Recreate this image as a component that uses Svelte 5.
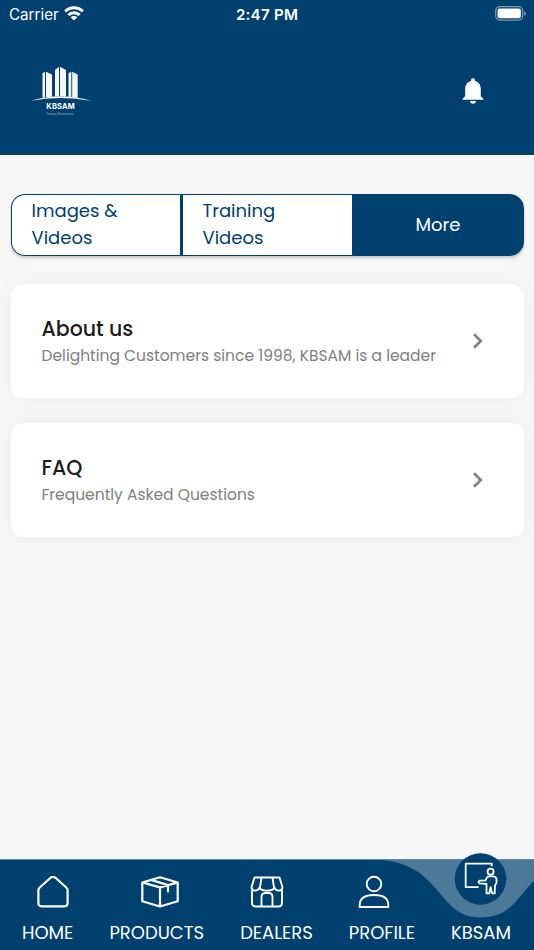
<script lang="ts">
  interface Item {
    title: string;
    text: string;
  }

  const tabs = ['Images & Videos', 'Training Videos', 'More'];

  const items: Item[] = [
    { title: 'About us', text: 'Delighting Customers since 1998, KBSAM is a leader' },
    { title: 'FAQ', text: 'Frequently Asked Questions' }
  ];

  const labels = ['HOME', 'PRODUCTS', 'DEALERS', 'PROFILE', 'KBSAM'];

  let active = $state('More');
</script>

<div class="screen">
  <header>
    <div class="status">
      <div class="carrier">
        <span>Carrier</span>
        <svg width="20" height="15" viewBox="0 0 20 15" fill="none" stroke="#fff" stroke-width="3">
          <path d="M1.2 5.3C6.2.5 13.8.5 18.8 5.3" />
          <path d="M4.4 9c3.2-3 8-3 11.2 0" />
          <path d="M10 14.5 6.6 11.3c1.9-1.7 4.9-1.7 6.8 0Z" fill="#fff" stroke="none" />
        </svg>
      </div>
      <strong>2:47 PM</strong>
      <svg class="battery" width="32" height="15" viewBox="0 0 32 15">
        <rect x=".7" y=".7" width="27" height="13.4" rx="4" fill="none" stroke="#7f9fb7" stroke-width="1.2" />
        <rect x="2.5" y="2.5" width="23.4" height="9.8" rx="2.2" fill="#fff" />
        <path d="M29.2 5v4.8q1.8-.7 1.8-2.4T29.2 5Z" fill="#7f9fb7" />
      </svg>
    </div>
    <div class="brand">
      <svg width="60" height="52" viewBox="0 0 60 52">
        <g fill="#f6f6f6">
          <path d="M11.5 7.2 14 5.8v25.5l-2.5.4ZM15 5.8l6 2.7v22.2l-6 .6Z" />
          <path d="M24 4 28 .8v29.5l-4 .2ZM29 .7l6 3.2v26.7l-6-.3Z" />
          <path d="M37.5 7.2 40.3 5.8v25.3l-2.8-.4ZM41.2 5.8l5.5 2.6v23.5l-5.5-.7Z" />
          <path d="M0 34.8Q29 25.5 60 34.8 29 29 0 34.8Z" />
        </g>
        <text x="15.3" y="43.4" textLength="28.5" class="logo-name">KBSAM</text>
        <text x="15.5" y="49" textLength="27" class="logo-tag">Framing Relationships</text>
      </svg>
      <svg width="22" height="26" viewBox="0 0 22 26" fill="#fff">
        <path d="M11 .2c-1.2 0-2 .8-2 2v.9c-3.6.9-5.8 4-5.8 8v7.2L.6 20.8v1h20.8v-1l-2.6-2.5v-7.2c0-4-2.2-7.1-5.8-8v-.9c0-1.2-.8-2-2-2Z" />
        <path d="M8.2 23.1h5.6a2.8 2.6 0 0 1-5.6 0Z" />
      </svg>
    </div>
  </header>

  <main>
    <div class="tabs">
      {#each tabs as tab}
        <button class:active={active === tab} onclick={() => (active = tab)}>
          <span>{tab}</span>
        </button>
      {/each}
    </div>

    {#each items as item}
      <section class="card">
        <div>
          <h2>{item.title}</h2>
          <p>{item.text}</p>
        </div>
        <svg width="12" height="16" viewBox="0 0 12 16" fill="none" stroke="#808080" stroke-width="2.6">
          <path d="m2 1.3 6.8 6.7L2 14.7" />
        </svg>
      </section>
    {/each}
  </main>

  <nav>
    <svg class="wave" width="534" height="98" viewBox="0 0 534 98">
      <path d="M0 6.5H534V98H0Z" fill="#00406f" />
      <path d="M374 6.5H534V28C517 44 511 64.5 480 64.5C436 64.5 443 8 374 6.5Z" fill="#4d7999" />
      <path d="M0 6.5H534" stroke="#64879f" stroke-width=".8" />
      <circle cx="480.5" cy="26" r="25.8" fill="#00406f" />
    </svg>
    <div class="icons">
      <svg width="32" height="32" viewBox="0 0 32 32" class="icon">
        <path d="M1.4 14.5q0-1.8 1.3-3L13 2.2q3-2.7 6 0l10.3 9.3q1.3 1.2 1.3 3V27q0 3.3-3.3 3.3H4.7Q1.4 30.3 1.4 27Z" />
      </svg>
      <svg width="38" height="32" viewBox="0 0 38 32" class="icon">
        <path d="M1.3 6.5 19 1.3l17.7 5.2v18.7L19 30.5 1.3 25.2ZM1.3 6.5 19 11.4l17.7-4.9M19 11.4v19.1M10 3.9l17 5.2v7.2" />
      </svg>
      <svg width="34" height="32" viewBox="0 0 34 32" class="icon thin">
        <path d="M4.5 1.5h25l3 9.7c0 4.5-6.5 4.5-8 .5-1.8 4-13.2 4-15 0-1.5 4-8 4-8-.5ZM11.5 1.5 10 11.500M22.500 1.500 24 11.700M2 14v12.500q0 4 4 4h22q4 0 4-4V14M11.500 30.500V21q0-4 4-4h3q4 0 4 4v9.500" />
      </svg>
      <svg width="32" height="34" viewBox="0 0 32 34" class="icon thin">
        <circle cx="16" cy="9" r="7.3" />
        <path d="M1.7 32v-2C1.7 23.5 7 20 16 20s14.3 3.5 14.3 10v2Z" />
      </svg>
      <svg width="34" height="34" viewBox="0 0 34 34" class="icon teach">
        <path d="M14.5 25.2H1.7V1.7h26v2.5" />
        <circle cx="26.6" cy="9.7" r="3" />
        <path d="m21.5 18.3-6 .3q-2 1.5 0 2.8l7 .5v9.5h2.8l1.3-6.3 1.5 6.3h2.6l.3-8 1.5-2.5v-4.2q-.8-2.3-3.4-2.3h-4q-2 0-3.6 3.9Z" />
      </svg>
    </div>
    <div class="labels">
      {#each labels as label}
        <span>{label}</span>
      {/each}
    </div>
  </nav>
</div>

<style>
  :global(body) {
    background: #f7f7f7;
  }

  .screen {
    width: 534px;
    height: 950px;
    display: flex;
    flex-direction: column;
    background: #f7f7f7;
    overflow: hidden;
    font-family: Poppins, Inter, sans-serif;
  }

  header {
    height: 155px;
    background: #00406f;
    color: #fff;
  }

  .status {
    height: 28px;
    box-sizing: border-box;
    padding: 0 7px 0 9px;
    display: grid;
    grid-template-columns: 1fr auto 1fr;
    align-items: center;
    font-family: Inter, sans-serif;
    font-size: 15.2px;
  }

  .carrier {
    display: flex;
    gap: 5px;
    align-items: center;
  }

  .carrier svg {
    margin-top: -2px;
  }

  .status strong {
    font-weight: 600;
    letter-spacing: 0.2px;
    margin-right: 2px;
  }

  .battery {
    justify-self: end;
    margin-top: -2px;
  }

  .brand {
    display: flex;
    justify-content: space-between;
    padding: 38px 50px 0 31px;
  }

  .brand svg:last-child {
    margin-top: 12px;
  }

  .logo-name {
    font: 700 7.5px Inter, sans-serif;
    fill: #fff;
  }

  .logo-tag {
    font: 2.8px Inter, sans-serif;
    fill: #8ba8bc;
  }

  main {
    flex: 1;
    padding: 39px 10.5px 0;
  }

  .tabs {
    display: grid;
    grid-template-columns: repeat(3, 1fr);
    height: 61.5px;
    border-radius: 14px;
    box-shadow: 0 2px 3px #0003;
    margin-bottom: 28.5px;
  }

  button {
    display: flex;
    align-items: center;
    padding: 0 20px 2px;
    border: 1.5px solid #00406f;
    background: #fff;
    color: #00406f;
    font: inherit;
    font-size: 18px;
    line-height: 27px;
    text-align: left;
  }

  button span {
    width: 100px;
  }

  button:first-child {
    border-radius: 14px 0 0 14px;
    border-right-width: 2px;
  }

  button:last-child {
    border-radius: 0 14px 14px 0;
  }

  button.active {
    padding-bottom: 0;
    background: #00406f;
    color: #fff;
    justify-content: center;
  }

  button.active span {
    width: auto;
  }

  .card {
    display: flex;
    align-items: center;
    justify-content: space-between;
    height: 114px;
    box-sizing: border-box;
    padding: 0 40px 0 31px;
    margin-bottom: 25.4px;
    border-radius: 12px;
    background: #fff;
    box-shadow: 0 0 20px #0000000d;
  }

  h2 {
    margin: 0;
    font-size: 20.5px;
    line-height: 28px;
    font-weight: 500;
    color: #1c1c1c;
  }

  p {
    margin: 0;
    font-size: 15.5px;
    line-height: 25px;
    color: #808080;
    white-space: nowrap;
  }

  nav {
    position: relative;
    height: 97px;
    color: #fff;
  }

  .wave {
    position: absolute;
    left: 0;
    top: 0;
  }

  .icons,
  .labels {
    position: relative;
  }

  .icons {
    display: grid;
    grid-template-columns: repeat(5, 1fr);
    justify-items: center;
    height: 66px;
    align-items: center;
  }

  .icon {
    fill: none;
    stroke: #fff;
    stroke-width: 2.2;
    stroke-linejoin: round;
    margin-top: 12px;
  }

  .thin {
    stroke-width: 1.9;
  }

  .teach {
    stroke-width: 1.8;
    margin-top: -14px;
  }

  .labels {
    display: flex;
    justify-content: space-between;
    padding: 0 23px 0 22px;
    font-size: 18px;
    line-height: 28px;
  }
</style>
